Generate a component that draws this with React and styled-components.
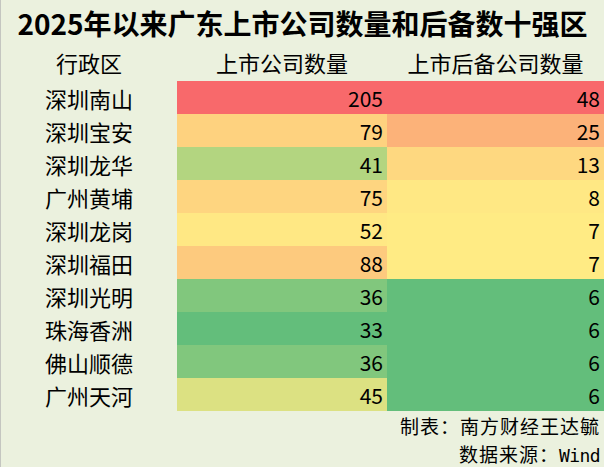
import React from "react";
import styled, { createGlobalStyle } from "styled-components";

const Global = createGlobalStyle`
  html, body { margin: 0; padding: 0; background: #ebf1de; }
  * { box-sizing: border-box; }
`;

const Page = styled.div`
  width: 604px;
  height: 467px;
  background: #ebf1de;
  border-left: 1px solid #c4c6c0;
  font-family: "Noto Sans CJK SC", "Noto Sans", sans-serif;
  color: #000;
  overflow: hidden;
`;

const Title = styled.h1`
  margin: 0;
  height: 45px;
  display: flex;
  align-items: center;
  justify-content: center;
  font-size: 28px;
  font-weight: 700;
`;

const Table = styled.div`
  display: grid;
  grid-template-columns: 176px 210px 217px;
`;

const HeadCell = styled.div`
  height: 36px;
  display: flex;
  align-items: center;
  justify-content: center;
  font-size: 22px;
  padding-bottom: 2px;
`;

const NameCell = styled.div`
  height: 33px;
  display: flex;
  align-items: center;
  justify-content: center;
  font-size: 22px;
`;

const NumCell = styled.div`
  height: 33px;
  display: flex;
  align-items: center;
  justify-content: flex-end;
  padding-right: 4px;
  font-size: 21px;
  background: ${(p) => p.$bg};
`;

const Footer = styled.div`
  display: flex;
  flex-direction: column;
  align-items: flex-end;
  padding: 1px 4px 0 0;
  font-size: 19px;
  letter-spacing: 1px;
  line-height: 28px;
`;

const Mono = styled.span`
  font-family: "DejaVu Sans Mono", monospace;
  font-size: 18px;
  letter-spacing: -0.6px;
`;

const rows = [
  ["深圳南山", 205, "#f8696b", 48, "#f8696b"],
  ["深圳宝安", 79, "#fed27f", 25, "#fcb279"],
  ["深圳龙华", 41, "#b3d580", 13, "#fed880"],
  ["广州黄埔", 75, "#fed580", 8, "#ffe884"],
  ["深圳龙岗", 52, "#ffe884", 7, "#ffeb84"],
  ["深圳福田", 88, "#fdca7e", 7, "#ffeb84"],
  ["深圳光明", 36, "#81c77d", 6, "#63be7b"],
  ["珠海香洲", 33, "#63be7b", 6, "#63be7b"],
  ["佛山顺德", 36, "#81c77d", 6, "#63be7b"],
  ["广州天河", 45, "#dce182", 6, "#63be7b"],
];

export default function App() {
  return (
    <>
      <Global />
      <Page>
        <Title>2025年以来广东上市公司数量和后备数十强区</Title>
        <Table>
          <HeadCell>行政区</HeadCell>
          <HeadCell>上市公司数量</HeadCell>
          <HeadCell>上市后备公司数量</HeadCell>
          {rows.map(([name, a, ca, b, cb]) => (
            <React.Fragment key={name}>
              <NameCell>{name}</NameCell>
              <NumCell $bg={ca}>{a}</NumCell>
              <NumCell $bg={cb}>{b}</NumCell>
            </React.Fragment>
          ))}
        </Table>
        <Footer>
          <div>制表：南方财经王达毓</div>
          <div>
            数据来源：<Mono>Wind</Mono>
          </div>
        </Footer>
      </Page>
    </>
  );
}
